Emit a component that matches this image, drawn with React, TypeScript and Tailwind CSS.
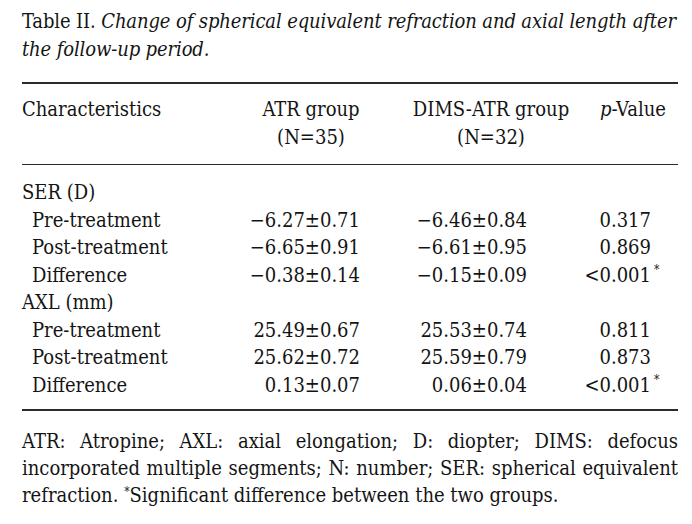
import React from 'react';

type Row = { label: string; atr?: string; dims?: string; p?: string; sig?: boolean; sub?: boolean };

const rows: Row[] = [
  { label: 'SER (D)' },
  { label: 'Pre-treatment', atr: '−6.27±0.71', dims: '−6.46±0.84', p: '0.317', sub: true },
  { label: 'Post-treatment', atr: '−6.65±0.91', dims: '−6.61±0.95', p: '0.869', sub: true },
  { label: 'Difference', atr: '−0.38±0.14', dims: '−0.15±0.09', p: '<0.001', sig: true, sub: true },
  { label: 'AXL (mm)' },
  { label: 'Pre-treatment', atr: '25.49±0.67', dims: '25.53±0.74', p: '0.811', sub: true },
  { label: 'Post-treatment', atr: '25.62±0.72', dims: '25.59±0.79', p: '0.873', sub: true },
  { label: 'Difference', atr: '0.13±0.07', dims: '0.06±0.04', p: '<0.001', sig: true, sub: true },
];

const grid = 'grid grid-cols-[218px_142px_198px_98px]';

function Rule() {
  return <div className="h-[1.5px] bg-[#2b2b2b]" />;
}

export default function App() {
  return (
    <div className="w-[692px] h-[524px] bg-white text-[#141414] font-['DejaVu_Serif_Condensed',serif] text-[20px]">
      <div className="pl-[22px] w-[678px]">
        {/* caption */}
        <div className="pt-[7px] leading-[28px]">
          <div className="whitespace-nowrap tracking-[-0.12px]">
            Table II. <i>Change of spherical equivalent refraction and axial length after</i>
          </div>
          <div className="whitespace-nowrap tracking-[-0.12px]">
            <i>the follow-up period.</i>
          </div>
        </div>

        <div className="mt-[19px]">
          <Rule />
        </div>

        {/* header */}
        <div className={`${grid} pt-[11px] pb-[13px] leading-[28px]`}>
          <div>Characteristics</div>
          <div className="text-center">
            <div>ATR group</div>
            <div>(N=35)</div>
          </div>
          <div className="text-center pl-[20px] whitespace-nowrap">
            <div>DIMS-ATR group</div>
            <div>(N=32)</div>
          </div>
          <div className="text-right pr-[12px] whitespace-nowrap">
            <i>p</i>-Value
          </div>
        </div>

        <Rule />

        {/* body */}
        <div className="pt-[14px] pb-[10px]">
          {rows.map((r, i) => (
            <div key={i} className={`${grid} leading-[27.5px] whitespace-nowrap`}>
              <div className={r.sub ? 'pl-[10px]' : ''}>{r.label}</div>
              <div className="text-right pr-[22px]">{r.atr}</div>
              <div className="text-right pr-[53px]">{r.dims}</div>
              <div className="text-right pr-[27px]">
                {r.p && (
                  <span className="relative">
                    {r.p}
                    {r.sig && <span className="absolute left-full top-[-6px] pl-[3px] text-[12px]">*</span>}
                  </span>
                )}
              </div>
            </div>
          ))}
        </div>

        <Rule />

        {/* footnote */}
        <div className="mt-[17px] leading-[27px]">
          <div className="text-justify [text-align-last:justify] whitespace-nowrap">
            ATR: Atropine; AXL: axial elongation; D: diopter; DIMS: defocus
          </div>
          <div className="text-justify [text-align-last:justify] whitespace-nowrap">
            incorporated multiple segments; N: number; SER: spherical equivalent
          </div>
          <div className="whitespace-nowrap">
            refraction. <sup className="text-[12px]">*</sup>Significant difference between the two groups.
          </div>
        </div>
      </div>
    </div>
  );
}
